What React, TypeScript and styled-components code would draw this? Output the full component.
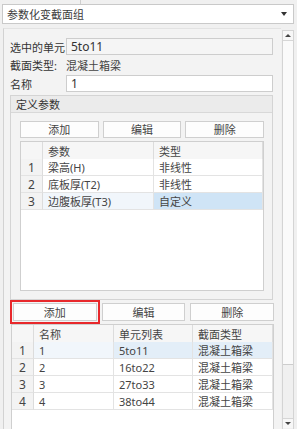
import React from "react";
import styled, { createGlobalStyle } from "styled-components";

const GlobalStyle = createGlobalStyle`
  html, body {
    margin: 0;
    padding: 0;
    background: #f0f0f0;
  }
  * {
    box-sizing: border-box;
  }
`;

const FONT = `"Noto Sans", "Noto Sans CJK SC", sans-serif`;

const Page = styled.div`
  width: 297px;
  height: 429px;
  overflow: hidden;
  background: #f0f0f0;
  font-family: ${FONT};
  font-size: 11px;
  color: #3c3c3c;
  display: flex;
  flex-direction: column;
`;

const TopEdge = styled.div`
  height: 4px;
  margin-left: 80px;
  border-left: 1px solid #cfcfcf;
`;

const Dropdown = styled.div`
  height: 20px;
  margin: 0 3px 0 2px;
  background: #fff;
  border: 1px solid #c9c9c9;
  display: flex;
  align-items: center;
  justify-content: space-between;
  padding: 0 4px 0 4px;
  line-height: 1;
`;

const Caret = styled.span`
  width: 0;
  height: 0;
  border-left: 3.5px solid transparent;
  border-right: 3.5px solid transparent;
  border-top: 4px solid #333;
  margin-right: 2px;
`;

const Body = styled.div`
  flex: 1;
  display: flex;
  margin-top: 4px;
  min-height: 0;
`;

const Panel = styled.div`
  flex: 1;
  margin-left: 3px;
  border-left: 1px solid #d2d2d2;
  border-top: 1px solid #e2e2e2;
  background: #f3f3f3;
  padding: 9px 8px 0 6px;
  display: flex;
  flex-direction: column;
  min-height: 0;
  overflow: hidden;
`;

const FormGrid = styled.div`
  display: grid;
  grid-template-columns: 56px 1fr;
  align-items: center;
`;

const Label = styled.div`
  color: #333;
  white-space: nowrap;
`;

const Input = styled.div<{ $readOnly?: boolean }>`
  height: 17px;
  border: 1px solid #cdcdcd;
  background: ${(p) => (p.$readOnly ? "#f5f5f5" : "#fff")};
  padding: 0 4px;
  display: flex;
  align-items: center;
  color: #333;
  font-size: 12px;
`;

const PlainValue = styled.div`
  height: 20px;
  display: flex;
  align-items: center;
  color: #444;
`;

const GroupBox = styled.div`
  margin-top: 3px;
  border: 1px solid #d4d4d4;
  background: #f3f3f3;
  display: flex;
  flex-direction: column;
`;

const GroupHeader = styled.div`
  height: 17px;
  background: #ebebeb;
  border-bottom: 1px solid #d8d8d8;
  padding-left: 5px;
  display: flex;
  align-items: center;
  color: #333;
`;

const GroupBody = styled.div`
  padding: 8px 8px 8px 9px;
  display: flex;
  flex-direction: column;
  gap: 3px;
`;

const ButtonRow = styled.div<{ $gap: number }>`
  display: grid;
  grid-template-columns: 1fr 1fr 1fr;
  gap: ${(p) => p.$gap}px;
`;

const Button = styled.button<{ $marked?: boolean; $h: number }>`
  height: ${(p) => p.$h}px;
  border: 1px solid #cfcfcf;
  background: #fdfdfd;
  font-family: ${FONT};
  font-size: 11px;
  color: #444;
  padding: 0;
  line-height: 1;
  outline: ${(p) => (p.$marked ? "2px solid #e8282b" : "none")};
  outline-offset: 1px;
  border-radius: 0;
`;

const Table = styled.div<{ $cols: string; $h?: number }>`
  background: #fff;
  border: 1px solid #cfcfcf;
  display: grid;
  grid-template-columns: ${(p) => p.$cols};
  grid-auto-rows: 17px;
  align-content: start;
  ${(p) => (p.$h ? `height: ${p.$h}px;` : "flex: 1;")}
`;

const HeadCell = styled.div`
  height: 18px;
  background: #f6f6f6;
  border-right: 1px solid #dcdcdc;
  border-bottom: 1px solid #d6d6d6;
  display: flex;
  align-items: center;
  padding-left: 5px;
  color: #444;
  &:last-child {
    border-right: none;
  }
`;

const NumCell = styled.div`
  background: #f3f3f3;
  border-right: 1px solid #dcdcdc;
  border-bottom: 1px solid #e3e3e3;
  display: flex;
  align-items: center;
  justify-content: center;
  color: #444;
  font-size: 12px;
`;

const Cell = styled.div<{ $tone?: "none" | "soft" | "mid" | "strong" }>`
  border-right: 1px solid #e3e3e3;
  border-bottom: 1px solid #e3e3e3;
  display: flex;
  align-items: center;
  padding-left: 5px;
  color: #444;
  white-space: nowrap;
  overflow: hidden;
  background: ${(p) =>
    p.$tone === "strong"
      ? "#cfe4f6"
      : p.$tone === "mid"
      ? "#e3eef8"
      : p.$tone === "soft"
      ? "#f1f6fb"
      : "#fff"};
`;

const SecondBlock = styled.div`
  margin-top: 3px;
  padding-left: 3px;
  margin-right: -1px;
  flex: 1;
  display: flex;
  flex-direction: column;
  gap: 3px;
  min-height: 0;
`;

const BottomTable = styled(Table)`
  margin-left: -2px;
  border-bottom: none;
`;

const ScrollBar = styled.div`
  width: 12px;
  margin: 2px 3px 0 1px;
  border: 1px solid #d4d4d4;
  border-bottom: none;
  background: #f0f0f0;
  display: flex;
  flex-direction: column;
`;

const ScrollBtn = styled.div`
  height: 10px;
  background: #f7f7f7;
  border-bottom: 1px solid #d6d6d6;
  display: flex;
  align-items: center;
  justify-content: center;
`;

const ScrollBtnBottom = styled(ScrollBtn)`
  border-bottom: none;
  border-top: 1px solid #d6d6d6;
  margin-top: auto;
  margin-bottom: 1px;
`;

const Thumb = styled.div`
  height: 324px;
  background: #fafafa;
  border-bottom: 1px solid #cdcdcd;
`;

const Tri = styled.span<{ $up?: boolean }>`
  width: 0;
  height: 0;
  border-left: 3px solid transparent;
  border-right: 3px solid transparent;
  ${(p) => (p.$up ? "border-bottom: 3px solid #444;" : "border-top: 3px solid #444;")}
`;

const params = [
  { name: "梁高(H)", type: "非线性" },
  { name: "底板厚(T2)", type: "非线性" },
  { name: "边腹板厚(T3)", type: "自定义" },
];

const groups = [
  { name: "1", units: "5to11", kind: "混凝土箱梁" },
  { name: "2", units: "16to22", kind: "混凝土箱梁" },
  { name: "3", units: "27to33", kind: "混凝土箱梁" },
  { name: "4", units: "38to44", kind: "混凝土箱梁" },
];

export default function App() {
  return (
    <Page>
      <GlobalStyle />
      <TopEdge />
      <Dropdown>
        <span>参数化变截面组</span>
        <Caret />
      </Dropdown>
      <Body>
        <Panel>
          <FormGrid>
            <Label>选中的单元</Label>
            <Input $readOnly>5to11</Input>
            <Label>截面类型:</Label>
            <PlainValue>混凝土箱梁</PlainValue>
            <Label>名称</Label>
            <Input>1</Input>
          </FormGrid>

          <GroupBox>
            <GroupHeader>定义参数</GroupHeader>
            <GroupBody>
              <ButtonRow $gap={4}>
                <Button $h={17}>添加</Button>
                <Button $h={17}>编辑</Button>
                <Button $h={17}>删除</Button>
              </ButtonRow>
              <Table $cols="22px 111px 1fr" $h={150}>
                <HeadCell />
                <HeadCell>参数</HeadCell>
                <HeadCell>类型</HeadCell>
                {params.map((p, i) => {
                  const sel = i === 2;
                  return (
                    <React.Fragment key={p.name}>
                      <NumCell>{i + 1}</NumCell>
                      <Cell $tone={sel ? "soft" : "none"}>{p.name}</Cell>
                      <Cell $tone={sel ? "strong" : "none"}>{p.type}</Cell>
                    </React.Fragment>
                  );
                })}
              </Table>
            </GroupBody>
          </GroupBox>

          <SecondBlock>
            <ButtonRow $gap={5}>
              <Button $h={18} $marked>
                添加
              </Button>
              <Button $h={18}>编辑</Button>
              <Button $h={18}>删除</Button>
            </ButtonRow>
            <BottomTable $cols="22px 80px 79px 1fr">
              <HeadCell />
              <HeadCell>名称</HeadCell>
              <HeadCell>单元列表</HeadCell>
              <HeadCell>截面类型</HeadCell>
              {groups.map((g, i) => {
                const sel = i === 0;
                return (
                  <React.Fragment key={g.name}>
                    <NumCell>{i + 1}</NumCell>
                    <Cell $tone={sel ? "soft" : "none"}>{g.name}</Cell>
                    <Cell $tone={sel ? "mid" : "none"}>{g.units}</Cell>
                    <Cell $tone={sel ? "mid" : "none"}>{g.kind}</Cell>
                  </React.Fragment>
                );
              })}
            </BottomTable>
          </SecondBlock>
        </Panel>
        <ScrollBar>
          <ScrollBtn>
            <Tri $up />
          </ScrollBtn>
          <Thumb />
          <ScrollBtnBottom>
            <Tri />
          </ScrollBtnBottom>
        </ScrollBar>
      </Body>
    </Page>
  );
}
